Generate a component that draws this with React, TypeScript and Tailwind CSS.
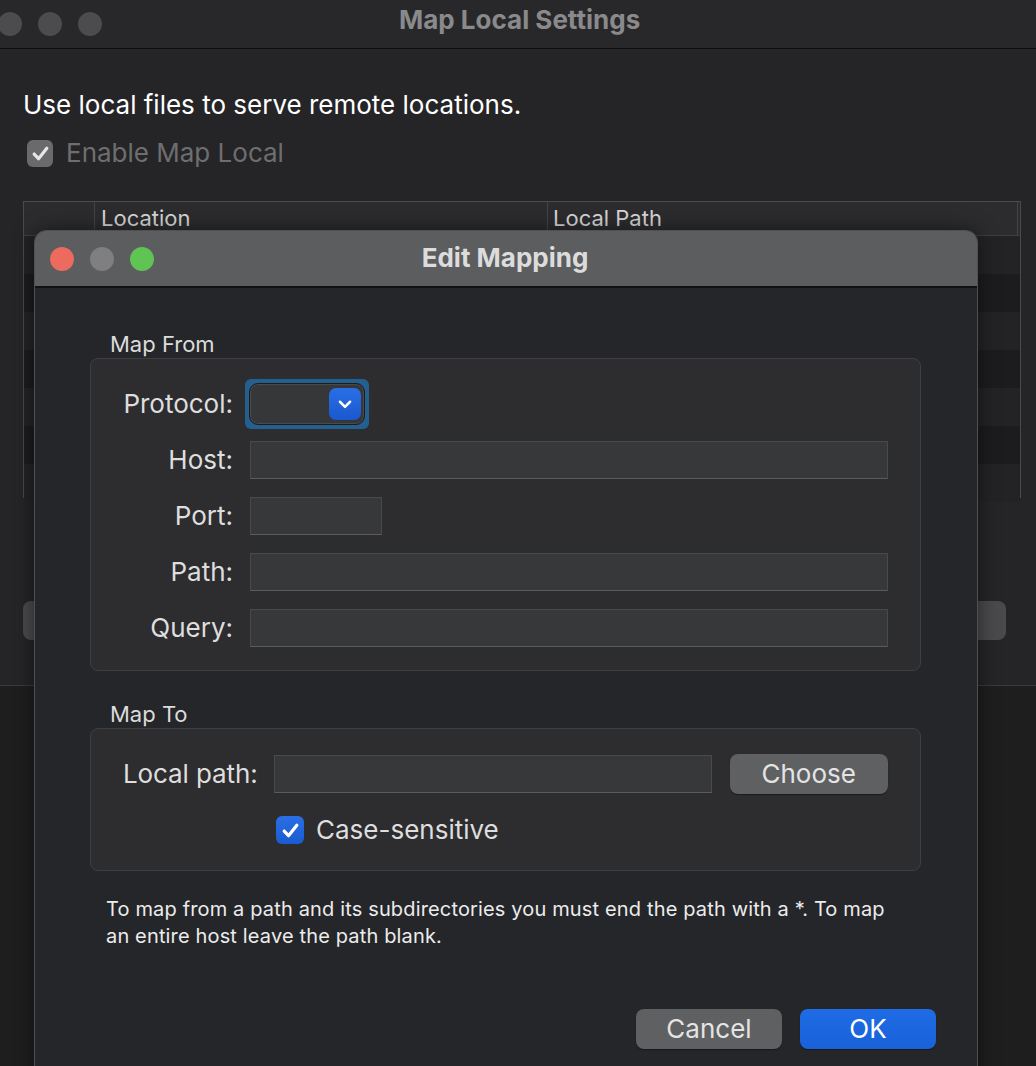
import React from "react";

const font = { fontFamily: 'Inter, "Liberation Sans", sans-serif' };

function Check({ className }: { className?: string }) {
  return (
    <svg viewBox="0 0 20 20" className={className} fill="none">
      <path d="M4.5 10.5 L8.3 14.5 L15.5 5.5" stroke="currentColor" strokeWidth="2.8" strokeLinecap="round" strokeLinejoin="round" />
    </svg>
  );
}

function Field({ w }: { w: string }) {
  return <div className={`${w} h-[38px] bg-[#37383a] border border-[#48494b] border-b-[#5a5b5d]`} />;
}

function Row({ label, children }: { label: string; children: React.ReactNode }) {
  return (
    <div className="flex h-[56px] items-center">
      <div className="w-[110px] text-right text-[26px] leading-[32px] text-[#dedede]">{label}</div>
      <div className="ml-[17px] flex items-center">{children}</div>
    </div>
  );
}

export default function App() {
  const rows = [0, 1, 2, 3, 4, 5, 6];
  return (
    <div className="relative h-[1066px] w-[1036px] overflow-hidden bg-[#1e1e1f]" style={font}>
      {/* Background window */}
      <div className="flex h-[686px] flex-col border-b border-[#3a3a3c] bg-[#252527]">
        <div className="relative flex h-[49px] shrink-0 items-center border-b border-[#0e0e0e] bg-[#28282a]">
          <div className="ml-[-2px] flex gap-[16px]">
            <div className="h-[24px] w-[24px] rounded-full bg-[#4c4c4e]" />
            <div className="h-[24px] w-[24px] rounded-full bg-[#4c4c4e]" />
            <div className="h-[24px] w-[24px] rounded-full bg-[#4c4c4e]" />
          </div>
          <div className="absolute left-[399px] top-[4px] text-[26px] font-bold leading-[32px] text-[#8a8a8c]">Map Local Settings</div>
        </div>
        <div className="pl-[23px] pt-[40px]">
          <div className="text-[26px] leading-[32px] text-white">Use local files to serve remote locations.</div>
          <div className="mt-[16px] flex items-center pl-[4px]">
            <div className="flex h-[27px] w-[26px] items-center justify-center rounded-[6px] bg-[#6a6a6c] text-[#e6e6e6]">
              <Check className="h-[23px] w-[23px]" />
            </div>
            <div className="ml-[13px] text-[26px] leading-[32px] text-[#6e6e70]">Enable Map Local</div>
          </div>
          <div className="mt-[32px] h-[297px] w-[998px] border border-[#4a4a4c] bg-[#232325]">
            <div className="flex h-[34px] border-b border-[#3e3e40] bg-[#2c2c2e] text-[22px] leading-[32px] text-[#d6d6d6]">
              <div className="w-[71px] border-r border-[#444446]" />
              <div className="w-[453px] border-r border-[#444446] pl-[6px]">Location</div>
              <div className="flex-1 border-r border-[#444446] pl-[5px]">Local Path</div>
              <div className="w-[2px]" />
            </div>
            {rows.map((r) => (
              <div key={r} className={`h-[38px] ${r % 2 === 0 ? "bg-[#232325]" : "bg-[#1c1c1e]"}`} />
            ))}
          </div>
          <div className="mt-[103px] flex w-[983px] justify-between">
            <div className="h-[39px] w-[120px] rounded-[8px] bg-[#4a4a4c]" />
            <div className="h-[39px] w-[120px] rounded-[8px] bg-[#4a4a4c]" />
          </div>
        </div>
      </div>

      {/* Edit Mapping dialog */}
      <div className="absolute left-[34px] top-[230px] flex h-[900px] w-[944px] flex-col overflow-hidden rounded-t-[12px] border border-[#505053] bg-[#252629] shadow-[0_0_20px_rgba(0,0,0,0.5)]">
        <div className="relative flex h-[57px] shrink-0 items-center border-b-2 border-[#111] bg-[#5c5d5f]">
          <div className="ml-[15px] flex gap-[16px]">
            <div className="h-[24px] w-[24px] rounded-full bg-[#ec6a5e]" />
            <div className="h-[24px] w-[24px] rounded-full bg-[#7f7f81]" />
            <div className="h-[24px] w-[24px] rounded-full bg-[#5fc454]" />
          </div>
          <div className="absolute left-0 right-[2px] top-[11px] text-center text-[26px] font-bold leading-[32px] text-[#dcdcdc]">Edit Mapping</div>
        </div>

        <div className="pl-[55px] pt-[42px]">
          <div className="pl-[20px] text-[22px] leading-[28px] text-[#dcdcdc]">Map From</div>
          <div className="w-[831px] rounded-[8px] border border-[#3f3f42] bg-[#2d2d2f] pb-[14px] pl-[32px] pt-[17px]">
            <Row label="Protocol:">
              <div className="-ml-[5px] flex h-[50px] w-[124px] items-center justify-center rounded-[6px] bg-[#235f8f]">
                <div className="flex h-[42px] w-[116px] items-center justify-end rounded-[9px] border border-[#1d1d1f] bg-[#363739] pr-[3px] shadow-[inset_0_0_0_1px_#4a4a4c]">
                  <div className="flex h-[32px] w-[32px] items-center justify-center rounded-[7px] bg-gradient-to-b from-[#2a6fe6] to-[#1a58cf] text-white">
                    <svg viewBox="0 0 16 16" className="h-[18px] w-[18px]" fill="none">
                      <path d="M3.5 6 L8 10.5 L12.5 6" stroke="currentColor" strokeWidth="2.2" strokeLinecap="round" strokeLinejoin="round" />
                    </svg>
                  </div>
                </div>
              </div>
            </Row>
            <Row label="Host:"><Field w="w-[638px]" /></Row>
            <Row label="Port:"><Field w="w-[132px]" /></Row>
            <Row label="Path:"><Field w="w-[638px]" /></Row>
            <Row label="Query:"><Field w="w-[638px]" /></Row>
          </div>

          <div className="mt-[29px] pl-[20px] text-[22px] leading-[28px] text-[#dcdcdc]">Map To</div>
          <div className="h-[143px] w-[831px] rounded-[8px] border border-[#3f3f42] bg-[#2d2d2f] pl-[32px] pt-[17px]">
            <div className="flex h-[56px] items-center">
              <div className="text-[26px] leading-[32px] tracking-[-0.1px] text-[#dedede]">Local path:</div>
              <div className="ml-[16px]"><Field w="w-[438px]" /></div>
              <div className="ml-[18px] flex h-[40px] w-[158px] items-center justify-center rounded-[8px] bg-[#5f6062] text-[26px] leading-[32px] text-[#e4e4e4] shadow-[0_1px_1px_rgba(0,0,0,0.4)]">Choose</div>
            </div>
            <div className="flex h-[56px] items-center pl-[153px]">
              <div className="flex h-[28px] w-[28px] items-center justify-center rounded-[6px] bg-gradient-to-b from-[#2a6fe6] to-[#1a5ccf] text-white">
                <Check className="h-[23px] w-[23px]" />
              </div>
              <div className="ml-[12px] text-[26px] leading-[32px] text-[#dedede]">Case-sensitive</div>
            </div>
          </div>

          <div className="ml-[16px] mt-[25px] text-[20px] leading-[27px] tracking-[0.15px] text-[#ececec]">
            To map from a path and its subdirectories you must end the path with a *. To map
            <br />
            an entire host leave the path blank.
          </div>

          <div className="mt-[59px] flex w-[846px] justify-end gap-[18px]">
            <div className="flex h-[40px] w-[146px] items-center justify-center rounded-[8px] bg-[#5f6062] text-[26px] leading-[32px] text-[#e4e4e4] shadow-[0_1px_1px_rgba(0,0,0,0.4)]">Cancel</div>
            <div className="flex h-[40px] w-[136px] items-center justify-center rounded-[8px] bg-gradient-to-b from-[#1f6ce6] to-[#1861d8] text-[26px] leading-[32px] text-white shadow-[0_1px_1px_rgba(0,0,0,0.4)]">OK</div>
          </div>
        </div>
      </div>
    </div>
  );
}
